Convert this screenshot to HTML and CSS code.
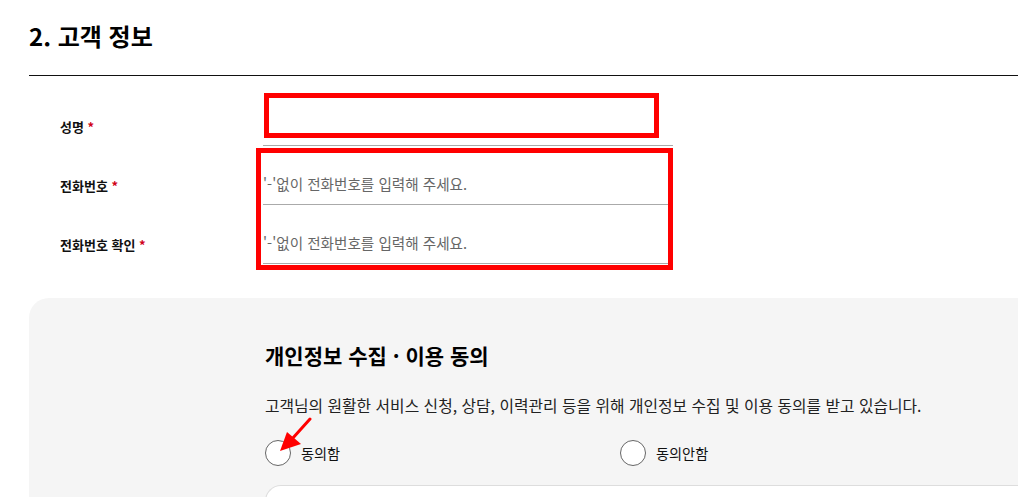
FILE: index.html
```html
<!DOCTYPE html>
<html lang="ko">
<head>
<meta charset="utf-8">
<title>고객 정보</title>
<link rel="stylesheet" href="styles.css">
</head>
<body>
<div class="page">
  <h2 class="section-title">2. 고객 정보</h2>

  <div class="form">
    <div class="row">
      <label class="label">성명 <span class="req">*</span></label>
      <input class="field" type="text">
    </div>
    <div class="row">
      <label class="label">전화번호 <span class="req">*</span></label>
      <input class="field" type="text" placeholder="'-'없이 전화번호를 입력해 주세요.">
    </div>
    <div class="row">
      <label class="label">전화번호 확인 <span class="req">*</span></label>
      <input class="field" type="text" placeholder="'-'없이 전화번호를 입력해 주세요.">
    </div>
    <div class="mark mark-name"></div>
    <div class="mark mark-phone"></div>
  </div>

  <section class="agree">
    <div class="agree-inner">
      <h3 class="agree-title">개인정보 수집 · 이용 동의</h3>
      <p class="agree-desc">고객님의 원활한 서비스 신청, 상담, 이력관리 등을 위해 개인정보 수집 및 이용 동의를 받고 있습니다.</p>
      <div class="options">
        <label class="option"><span class="radio"></span><span class="opt-text">동의함</span></label>
        <label class="option"><span class="radio"></span><span class="opt-text">동의안함</span></label>
      </div>
      <div class="terms-box"></div>
      <svg class="arrow" width="40" height="40" viewBox="0 0 40 40">
        <line x1="34" y1="2" x2="16" y2="22" stroke="#ff0000" stroke-width="3" stroke-linecap="round"/>
        <polygon points="4,34 11,15 25,27" fill="#ff0000"/>
      </svg>
    </div>
  </section>
</div>
</body>
</html>
```

FILE: styles.css
```css
html, body {
  margin: 0;
  padding: 0;
  overflow: hidden;
  background: #fff;
}
body {
  font-family: "Noto Sans CJK KR", "Noto Sans", sans-serif;
  color: #111;
}
.page {
  width: 1100px;
  padding-left: 29px;
}
.section-title {
  margin: 0;
  padding: 18px 0 21px;
  font-size: 24px;
  line-height: 36px;
  font-weight: 700;
  color: #000;
  border-bottom: 1px solid #111;
}
.form {
  position: relative;
  margin-top: 11px;
}
.row {
  display: flex;
  align-items: center;
  padding-top: 20px;
}
.label {
  width: 203px;
  padding-left: 31px;
  font-size: 13px;
  font-weight: 700;
  color: #111;
}
.req {
  color: #d0021b;
}
.field {
  box-sizing: border-box;
  width: 410px;
  height: 39px;
  margin: 0;
  padding: 0 0 4px;
  border: 0;
  border-bottom: 1px solid #aaa;
  font-family: inherit;
  font-size: 14.6px;
  color: #333;
  background: transparent;
  outline: none;
}
.field::placeholder {
  color: #666;
}
.mark {
  position: absolute;
  box-sizing: border-box;
  border: 5px solid #ff0000;
}
.mark-name {
  left: 235px;
  top: 6px;
  width: 395px;
  height: 45px;
}
.mark-phone {
  left: 227px;
  top: 61px;
  width: 417px;
  height: 122px;
}
.agree {
  margin-top: 34px;
  background: #f5f5f5;
  border-top-left-radius: 20px;
  height: 260px;
}
.agree-inner {
  position: relative;
  padding: 42px 0 0 236px;
}
.agree-title {
  margin: 0;
  font-size: 21px;
  line-height: 30px;
  font-weight: 700;
  color: #000;
}
.agree-desc {
  margin: 25px 0 0;
  font-size: 15.8px;
  line-height: 22px;
  color: #222;
}
.options {
  display: grid;
  grid-template-columns: 355px 355px;
  margin-top: 23px;
}
.option {
  display: flex;
  align-items: center;
  gap: 10px;
  font-size: 14.2px;
  color: #111;
}
.radio {
  box-sizing: border-box;
  width: 26px;
  height: 26px;
  border: 1px solid #666;
  border-radius: 50%;
  background: #fff;
}
.terms-box {
  margin-top: 19px;
  height: 60px;
  background: #fff;
  border: 1px solid #ddd;
  border-right: 0;
  border-top-left-radius: 16px;
}
.arrow {
  position: absolute;
  left: 247px;
  top: 119px;
}
```
